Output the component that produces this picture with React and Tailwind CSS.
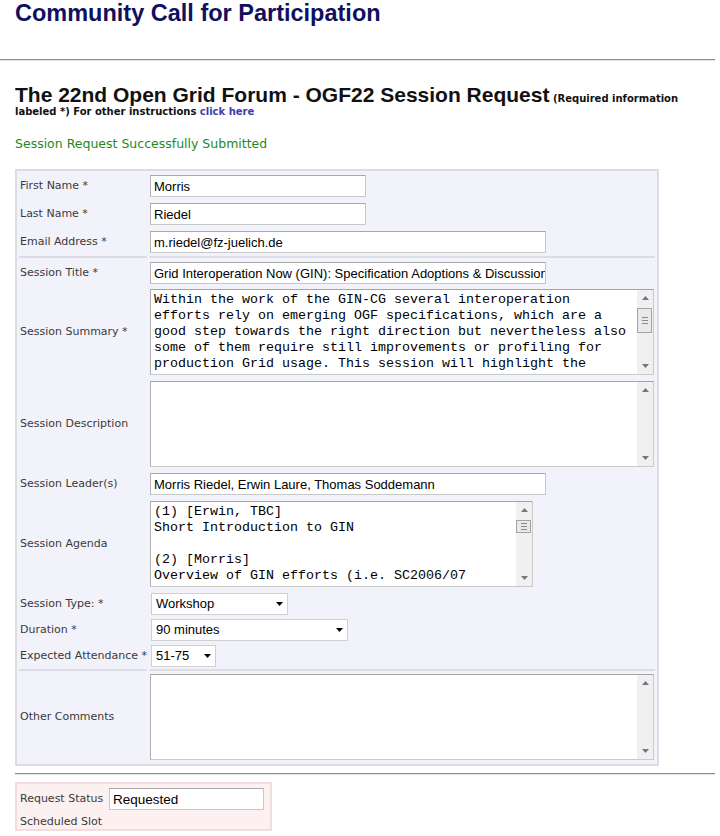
import React from 'react';

const summaryLines = [
    'Within the work of the GIN-CG several interoperation',
    'efforts rely on emerging OGF specifications, which are a',
    'good step towards the right direction but nevertheless also',
    'some of them require still improvements or profiling for',
    'production Grid usage. This session will highlight the',
    'current state of the specifications used within GIN.',
];

const agendaLines = [
    '(1) [Erwin, TBC]',
    'Short Introduction to GIN',
    '',
    '(2) [Morris]',
    'Overview of GIN efforts (i.e. SC2006/07',
    'demonstrations)',
];

const Label = ({ children, w = 'w-[133px]' }) => (
    <div className={`${w} shrink-0 whitespace-nowrap pl-[3px] text-[11px] leading-[14px] text-[#3a3a3a]`}>{children}</div>
);

const Row = ({ label, mt, children }) => (
    <div className={`flex items-center ${mt}`}>
        <Label>{label}</Label>
        {children}
    </div>
);

const TextInput = ({ value, w }) => (
    <input
        readOnly
        value={value}
        className={`${w} h-[22px] border border-[#c8c8c8] border-t-[#a8a8a8] border-l-[#b4b4b4] bg-white pl-[3px] font-['Liberation_Sans',Arial,sans-serif] text-[13px] text-black outline-none`}
    />
);

const Arrow = ({ down }) => (
    <svg width="7" height="4" viewBox="0 0 7 4" className="block">
        {down
            ? <polygon points="0,0 7,0 3.5,4" fill="#777" />
            : <polygon points="0,4 7,4 3.5,0" fill="#777" />}
    </svg>
);

const Scrollbar = ({ thumb }) => (
    <div className="flex h-full w-[16px] shrink-0 flex-col bg-[#f0f0f0]">
        <div className="flex h-[16px] items-center justify-center"><Arrow /></div>
        {thumb && (
            <div className={`mt-[2px] flex ${thumb} w-[15px] flex-col items-center justify-center gap-[2px] border border-[#a4a4a4] bg-[#e9e9e9]`}>
                <div className="h-px w-[6px] bg-[#8a8a8a]" />
                <div className="h-px w-[6px] bg-[#8a8a8a]" />
                <div className="h-px w-[6px] bg-[#8a8a8a]" />
            </div>
        )}
        <div className="flex-1" />
        <div className="flex h-[16px] items-center justify-center"><Arrow down /></div>
    </div>
);

const TextArea = ({ w, lines = [], thumb }) => (
    <div className={`flex ${w} h-[86px] border border-[#cacaca] border-t-[#a4a4a4] border-l-[#b0b0b0] bg-white`}>
        <div className="flex-1 overflow-hidden whitespace-pre pl-[3px] pt-[2px] font-['Liberation_Mono','Courier_New',monospace] text-[13.33px] leading-[16px] text-black">
            {lines.join('\n')}
        </div>
        <Scrollbar thumb={thumb} />
    </div>
);

const Select = ({ value, w }) => (
    <div className={`ml-px flex h-[22px] ${w} items-center justify-between border border-[#d0d0d0] bg-white pl-[4px] pr-[4px] font-['Liberation_Sans',Arial,sans-serif] text-[13px] leading-[16px] text-black`}>
        <span>{value}</span>
        <svg width="7" height="4" viewBox="0 0 7 4">
            <polygon points="0,0 7,0 3.5,4" fill="#000" />
        </svg>
    </div>
);

const Separator = ({ mt }) => (
    <div className={`flex h-[2px] ${mt}`}>
        <div className="ml-[2px] w-[128px] bg-[#dcdce6]" />
        <div className="ml-[3px] w-[505px] bg-[#dcdce6]" />
    </div>
);

export default function App() {
    return (
        <div className="min-h-[836px] w-[720px] bg-white font-['DejaVu_Sans',Verdana,sans-serif]">
            <h1 className="pl-[15px] font-['Liberation_Sans',Arial,sans-serif] text-[23.5px] leading-[27px] font-bold text-[#10105e]">
                Community Call for Participation
            </h1>

            <div className="mt-[32px] h-[2px] w-[715px] border-t border-b border-t-[#8c8c8c] border-b-[#e6e6e6]" />

            {/* Heading with inline note */}
            <div className="mt-[23px] pl-[15px] pr-[30px] text-[10px] leading-[13px] font-bold text-[#111]">
                <span className="font-['Liberation_Sans',Arial,sans-serif] text-[21px] leading-[21px]">
                    The 22nd Open Grid Forum - OGF22 Session Request
                </span>{' '}
                (Required information labeled *) For other instructions{' '}
                <a className="text-[#3c3cb0]">click here</a>
            </div>

            <div className="mt-[18px] pl-[15px] text-[12.5px] leading-[16px] text-[#1f881f]">
                Session Request Successfully Submitted
            </div>

            {/* Form */}
            <div className="ml-[15px] mt-[17px] w-[644px] border-2 border-[#dcdce2] bg-[#f2f2fb] pt-[4px] pb-[4px]">
                <Row label="First Name *" mt="mt-0">
                    <TextInput value="Morris" w="w-[216px]" />
                </Row>
                <Row label="Last Name *" mt="mt-[6px]">
                    <TextInput value="Riedel" w="w-[216px]" />
                </Row>
                <Row label="Email Address *" mt="mt-[6px]">
                    <TextInput value="m.riedel@fz-juelich.de" w="w-[396px]" />
                </Row>
                <Separator mt="mt-[3px]" />
                <Row label="Session Title *" mt="mt-[4px]">
                    <TextInput value="Grid Interoperation Now (GIN): Specification Adoptions & Discussions" w="w-[396px]" />
                </Row>
                <Row label="Session Summary *" mt="mt-[5px]">
                    <TextArea w="w-[504px]" lines={summaryLines} thumb="h-[25px]" />
                </Row>
                <Row label="Session Description" mt="mt-[6px]">
                    <TextArea w="w-[504px]" />
                </Row>
                <Row label="Session Leader(s)" mt="mt-[6px]">
                    <TextInput value="Morris Riedel, Erwin Laure, Thomas Soddemann" w="w-[396px]" />
                </Row>
                <Row label="Session Agenda" mt="mt-[6px]">
                    <TextArea w="w-[383px]" lines={agendaLines} thumb="h-[13px]" />
                </Row>
                <Row label="Session Type: *" mt="mt-[6px]">
                    <Select value="Workshop" w="w-[137px]" />
                </Row>
                <Row label="Duration *" mt="mt-[4px]">
                    <Select value="90 minutes" w="w-[197px]" />
                </Row>
                <Row label="Expected Attendance *" mt="mt-[4px]">
                    <Select value="51-75" w="w-[65px]" />
                </Row>
                <Separator mt="mt-[2px]" />
                <Row label="Other Comments" mt="mt-[3px]">
                    <TextArea w="w-[504px]" />
                </Row>
            </div>

            <div className="ml-[15px] mt-[7px] h-[2px] w-[700px] border-t border-b border-t-[#8c8c8c] border-b-[#e6e6e6]" />

            {/* Status */}
            <div className="ml-[15px] mt-[7px] h-[49px] w-[257px] border-2 border-[#f2dddd] bg-[#fcf0f0] pt-[4px]">
                <div className="flex items-center">
                    <Label w="w-[92px]">Request Status</Label>
                    <input
                        readOnly
                        value="Requested"
                        className="h-[22px] w-[155px] border border-[#c8c8c8] border-t-[#a8a8a8] bg-white pl-[3px] font-['Liberation_Sans',Arial,sans-serif] text-[13.5px] text-black outline-none"
                    />
                </div>
                <div className="mt-[5px]">
                    <Label>Scheduled Slot</Label>
                </div>
            </div>
        </div>
    );
}
